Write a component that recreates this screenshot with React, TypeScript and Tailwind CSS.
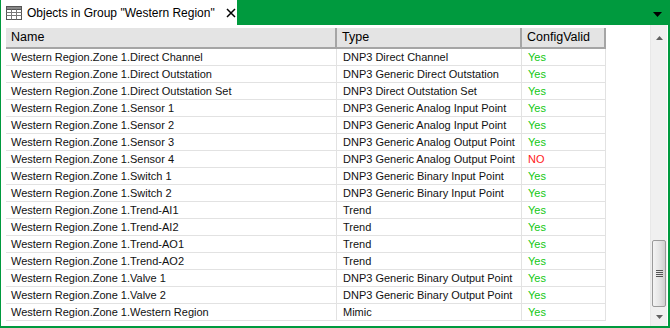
import React from "react";

const rows: [string, string, boolean][] = [
  ["Western Region.Zone 1.Direct Channel", "DNP3 Direct Channel", true],
  ["Western Region.Zone 1.Direct Outstation", "DNP3 Generic Direct Outstation", true],
  ["Western Region.Zone 1.Direct Outstation Set", "DNP3 Direct Outstation Set", true],
  ["Western Region.Zone 1.Sensor 1", "DNP3 Generic Analog Input Point", true],
  ["Western Region.Zone 1.Sensor 2", "DNP3 Generic Analog Input Point", true],
  ["Western Region.Zone 1.Sensor 3", "DNP3 Generic Analog Output Point", true],
  ["Western Region.Zone 1.Sensor 4", "DNP3 Generic Analog Output Point", false],
  ["Western Region.Zone 1.Switch 1", "DNP3 Generic Binary Input Point", true],
  ["Western Region.Zone 1.Switch 2", "DNP3 Generic Binary Input Point", true],
  ["Western Region.Zone 1.Trend-AI1", "Trend", true],
  ["Western Region.Zone 1.Trend-AI2", "Trend", true],
  ["Western Region.Zone 1.Trend-AO1", "Trend", true],
  ["Western Region.Zone 1.Trend-AO2", "Trend", true],
  ["Western Region.Zone 1.Valve 1", "DNP3 Generic Binary Output Point", true],
  ["Western Region.Zone 1.Valve 2", "DNP3 Generic Binary Output Point", true],
  ["Western Region.Zone 1.Western Region", "Mimic", true],
];

function TableIcon() {
  return (
    <svg width="16" height="14" viewBox="0 0 16 14" className="shrink-0">
      <rect x="0.5" y="0.5" width="15" height="13" fill="#fff" stroke="#555" />
      <rect x="0.5" y="0.5" width="15" height="3" fill="#888" stroke="#555" />
      <line x1="5.5" y1="3.5" x2="5.5" y2="13.5" stroke="#777" />
      <line x1="10.5" y1="3.5" x2="10.5" y2="13.5" stroke="#777" />
      <line x1="0.5" y1="6.5" x2="15.5" y2="6.5" stroke="#777" />
      <line x1="0.5" y1="9.5" x2="15.5" y2="9.5" stroke="#777" />
    </svg>
  );
}

export default function App() {
  return (
    <div className="w-[670px] h-[328px] bg-[#009a3e] flex flex-col pl-[1px] pr-[2px] pb-[2px] overflow-hidden font-['Liberation_Sans',Arial,sans-serif]">
      <div className="h-[25px] flex shrink-0">
        <div className="w-[236px] h-[25px] bg-white flex items-center pl-[5px] text-black whitespace-nowrap">
          <TableIcon />
          <span className="text-[12px] ml-[5px]">Objects in Group "Western Region"</span>
          <svg width="10" height="10" viewBox="0 0 10 10" className="ml-[11px] shrink-0">
            <path d="M1 1 L9 9 M9 1 L1 9" stroke="#000" strokeWidth="1.5" />
          </svg>
        </div>
        <div className="flex-1 flex items-center justify-end pr-[6px]">
          <svg width="9" height="5" viewBox="0 0 9 5" className="mt-[3px]">
            <path d="M0 0 H9 L4.5 5 Z" fill="#000" />
          </svg>
        </div>
      </div>
      <div className="flex-1 bg-white flex min-h-0">
        <div className="flex-1 pl-[5px] pt-[3px]">
          <div className="grid grid-cols-[331px_185px_84px]">
            {["Name", "Type", "ConfigValid"].map((h) => (
              <div
                key={h}
                className="h-[21px] bg-[#e4e4e4] border-r-2 border-b-2 border-[#a5a5a5] flex items-center pl-[5px] text-[12.5px] text-black"
              >
                {h}
              </div>
            ))}
            {rows.map(([n, t, ok]) => (
              <React.Fragment key={n}>
                <div className="h-[17px] border-b border-r border-[#e2e2e2] flex items-center pt-[1px] pl-[5px] text-[11px] text-[#111] whitespace-nowrap">
                  {n}
                </div>
                <div className="h-[17px] border-b border-r border-[#e2e2e2] flex items-center pt-[1px] pl-[6px] text-[11px] text-[#111] whitespace-nowrap">
                  {t}
                </div>
                <div
                  className={
                    "h-[17px] border-b border-r border-[#e2e2e2] flex items-center pt-[1px] pl-[6px] text-[11px] " +
                    (ok ? "text-[#12c812]" : "text-[#ff1a1a]")
                  }
                >
                  {ok ? "Yes" : "NO"}
                </div>
              </React.Fragment>
            ))}
          </div>
        </div>
        <div className="w-[17px] bg-[#f0f0f0] border-l border-[#e8e8e8] flex flex-col items-center mr-[1px]">
          <div className="h-[17px] w-full flex items-center justify-center mt-[4px]">
            <svg width="7" height="4" viewBox="0 0 7 4">
              <path d="M0 4 H7 L3.5 0 Z" fill="#606060" />
            </svg>
          </div>
          <div className="flex-1" />
          <div className="w-[14px] h-[67px] rounded-[2px] border border-[#9a9a9a] bg-gradient-to-r from-[#f4f4f4] via-[#e6e6e6] to-[#cfcfcf] flex items-center justify-center">
            <div className="flex flex-col gap-[1px]">
              <div className="w-[7px] h-[1px] bg-[#555]" />
              <div className="w-[7px] h-[1px] bg-[#555]" />
              <div className="w-[7px] h-[1px] bg-[#555]" />
              <div className="w-[7px] h-[1px] bg-[#555]" />
            </div>
          </div>
          <div className="h-[19px] w-full flex items-center justify-center">
            <svg width="7" height="4" viewBox="0 0 7 4">
              <path d="M0 0 H7 L3.5 4 Z" fill="#606060" />
            </svg>
          </div>
        </div>
      </div>
    </div>
  );
}
